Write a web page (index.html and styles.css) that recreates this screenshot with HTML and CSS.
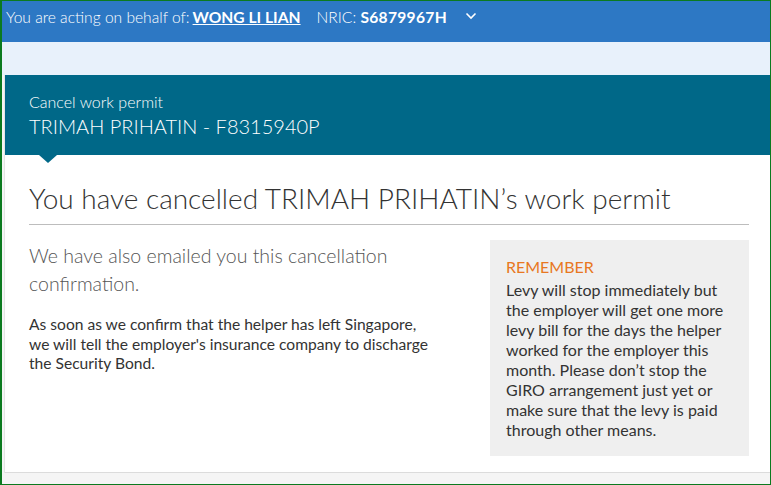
FILE: index.html
```html
<!DOCTYPE html>
<html lang="en">
<head>
  <meta charset="UTF-8">
  <meta name="viewport" content="width=device-width, initial-scale=1.0">
  <title>Cancel work permit</title>
  <link rel="stylesheet" href="styles.css">
</head>
<body>
  <div class="acting-bar">
    <span class="acting-label">You are acting on behalf of:</span>
    <a href="#" class="acting-name">WONG LI LIAN</a>
    <span class="acting-nric">NRIC: <strong>S6879967H</strong></span>
    <svg class="acting-toggle" width="12" height="8" viewBox="0 0 12 8">
      <path d="M1.5 1.5 L6 6 L10.5 1.5" fill="none" stroke="#fff" stroke-width="1.6"/>
    </svg>
  </div>
  <div class="sub-band"></div>

  <div id="main-container">
    <div class="page-header">
      <div class="page-kicker">Cancel work permit</div>
      <div class="page-title">TRIMAH PRIHATIN - F8315940P</div>
    </div>

    <div class="page-body">
      <h1 class="result-heading">You have cancelled TRIMAH PRIHATIN’s work permit</h1>
      <div class="result-row">
        <div class="result-main">
          <p class="lead">We have also emailed you this cancellation confirmation.</p>
          <p class="note">As soon as we confirm that the helper has left Singapore, we will tell the employer's insurance company to discharge the Security Bond.</p>
        </div>
        <div class="remember-box">
          <div class="remember-title">REMEMBER</div>
          <p>Levy will stop immediately but the employer will get one more levy bill for the days the helper worked for the employer this month. Please don’t stop the GIRO arrangement just yet or make sure that the levy is paid through other means.</p>
        </div>
      </div>
    </div>
  </div>
  <div class="page-foot"></div>
</body>
</html>
```

FILE: styles.css
```css
body, html {
  margin: 0;
  padding: 0;
}
body {
  height: 483px;
  overflow: hidden;
  border: 1px solid #0b7a1f;
  border-left-width: 2px;
  font-family: Lato, "Open Sans", sans-serif;
  background: #f5f5f5;
  color: #333;
}
.acting-bar {
  display: flex;
  align-items: center;
  height: 41px;
  padding: 0 0 9px 4px;
  box-sizing: border-box;
  background: #2d78c4;
  color: #fff;
  font-size: 15.6px;
}
.acting-label {
  font-weight: 300;
  font-size: 15.6px;
  margin-right: 3px;
}
.acting-name {
  color: #fff;
  font-weight: bold;
  text-decoration: underline;
  margin-right: 16px;
}
.acting-nric {
  font-weight: 300;
}
.acting-nric strong {
  font-weight: bold;
  letter-spacing: 0.3px;
}
.acting-toggle {
  margin-left: 18px;
  margin-top: -2px;
}
.sub-band {
  height: 33px;
  background: #e8f1fb;
}
#main-container {
  margin-left: 2px;
  border-left: 1px solid #e4e4e4;
  background: #fff;
}
.page-header {
  position: relative;
  height: 80px;
  padding: 17px 24px 0;
  box-sizing: border-box;
  background: #006888;
  color: #fff;
}
.page-header::after {
  content: "";
  position: absolute;
  left: 34px;
  top: 80px;
  border-left: 9px solid transparent;
  border-right: 9px solid transparent;
  border-top: 8px solid #006888;
}
.page-kicker {
  font-size: 16px;
  font-weight: 300;
  line-height: 20px;
}
.page-title {
  font-size: 20px;
  font-weight: 300;
  line-height: 26px;
  margin-top: 1px;
}
.page-body {
  padding: 26px 21px 16px 24px;
  border-bottom: 1px solid #dcdcdc;
}
.result-heading {
  margin: 0;
  padding-bottom: 9px;
  border-bottom: 1px solid #bdbdbd;
  font-size: 28px;
  font-weight: 300;
  line-height: 34px;
  color: #333;
}
.result-row {
  display: flex;
  justify-content: space-between;
  margin-top: 15px;
}
.result-main {
  width: 408px;
}
.lead {
  margin: 2px 0 0;
  font-size: 19.5px;
  font-weight: 300;
  line-height: 28px;
  color: #555;
}
.note {
  margin: 17px 0 0;
  font-size: 15.6px;
  line-height: 19.5px;
  color: #333;
}
.remember-box {
  width: 259px;
  height: 216px;
  padding: 17px 16px 0;
  box-sizing: border-box;
  background: #efefef;
}
.remember-title {
  font-size: 16px;
  line-height: 20px;
  color: #e87722;
}
.remember-box p {
  margin: 3px 0 0;
  font-size: 16px;
  line-height: 20px;
  color: #333;
}
.page-foot {
  height: 11px;
}
```
